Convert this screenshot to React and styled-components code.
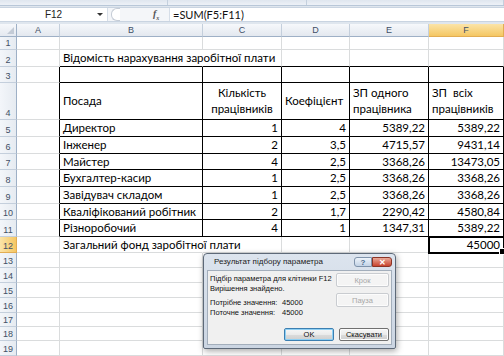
import React from "react";
import styled, { createGlobalStyle } from "styled-components";

const CELL_FONT = `Lato, "Open Sans", sans-serif`;
const UI_FONT = `"Liberation Sans", Arial, sans-serif`;
const GRID = "#dadcdd";
const INK = "#000";

const GlobalStyle = createGlobalStyle`
  html, body { margin: 0; padding: 0; background: #fff; overflow: hidden; }
  #root { width: 504px; height: 356px; overflow: hidden; }
`;

const Window = styled.div`
  position: relative;
  width: 504px;
  height: 356px;
  overflow: hidden;
  background: #dfe6ee;
`;

const RibbonEdge = styled.div`
  height: 6px;
  box-sizing: border-box;
  display: flex;
  background: linear-gradient(#dfe6ef, #edf1f7);
  border-bottom: 1px solid #b8c7d8;
`;

const RibbonGroup = styled.div`
  width: ${(p) => p.$w}px;
  border-right: 1px solid #c4d0de;
`;

const FormulaBar = styled.div`
  margin-top: 1px;
  height: 15px;
  box-sizing: border-box;
  display: flex;
  background: #fff;
  border-top: 1px solid #c9d4e1;
  border-bottom: 1px solid #c9d4e1;
`;

const NameBox = styled.div`
  position: relative;
  width: 107px;
  display: flex;
  align-items: center;
  justify-content: center;
  font: 10px ${UI_FONT};
  color: #222;
  border-right: 1px solid #d6dee8;
  &::after {
    content: "";
    position: absolute;
    right: 4px;
    top: 5px;
    border-left: 3px solid transparent;
    border-right: 3px solid transparent;
    border-top: 3px solid #333;
  }
`;

const FxZone = styled.div`
  width: 61px;
  display: flex;
  align-items: center;
  background: #f4f6f9;
`;

const Grip = styled.div`
  margin-left: 3px;
  width: 8px;
  height: 11px;
  border: 1px solid #c5ccd6;
  border-right: none;
  border-radius: 6px 0 0 6px;
  background: #fff;
`;

const Fx = styled.div`
  margin-left: 33px;
  font: italic bold 10px "Liberation Serif", serif;
  color: #555;
  sub {
    font-size: 6px;
  }
`;

const Formula = styled.div`
  flex: 1;
  display: flex;
  align-items: center;
  padding-left: 3px;
  font: 11px ${CELL_FONT};
  color: #111;
  border-left: 1px solid #d6dee8;
`;

const Sheet = styled.div`
  margin-top: 2px;
  display: grid;
  grid-template-columns: 17px 43px 143px 79px 68px 79px 75px;
  grid-template-rows:
    13px 13px 17px 16px 37px 17px 17px 16px 17px 17px 16px 17px 16px
    15px 15px 15px 15px 14px 14px 15px;
  background: #fff;
  font-family: ${CELL_FONT};
`;

const Corner = styled.div`
  position: relative;
  background: linear-gradient(#f6f8fb, #e4e9f0);
  border-right: 1px solid #9eb0c6;
  border-bottom: 1px solid #9eb0c6;
  &::after {
    content: "";
    position: absolute;
    right: 2px;
    bottom: 2px;
    border-left: 7px solid transparent;
    border-bottom: 7px solid #c3cbd6;
  }
`;

const ColHead = styled.div`
  display: flex;
  align-items: center;
  justify-content: center;
  font: 9px ${UI_FONT};
  color: #3f4f66;
  background: ${(p) =>
    p.$active ? "linear-gradient(#fbe4a8, #f5c763)" : "linear-gradient(#f6f8fb, #e3e8ef)"};
  border-right: 1px solid ${(p) => (p.$active ? "#e2ad52" : "#c4cfdc")};
  border-bottom: 1px solid ${(p) => (p.$active ? "#e2ad52" : "#9eb0c6")};
`;

const RowHead = styled.div`
  display: flex;
  align-items: flex-end;
  justify-content: center;
  padding-bottom: 1px;
  font: 9px ${UI_FONT};
  color: #3f4f66;
  background: ${(p) =>
    p.$active ? "linear-gradient(90deg, #fbe4a8, #f5c763)" : "linear-gradient(90deg, #f3f6fa, #e6ebf1)"};
  border-right: 1px solid ${(p) => (p.$active ? "#e2ad52" : "#9eb0c6")};
  border-bottom: 1px solid ${(p) => (p.$active ? "#e2ad52" : "#c4cfdc")};
`;

const Cell = styled.div`
  position: relative;
  display: flex;
  align-items: center;
  justify-content: ${(p) =>
    p.$align === "right" ? "flex-end" : p.$align === "center" ? "center" : "flex-start"};
  text-align: ${(p) => p.$align};
  padding: 0 3px;
  font-size: 11.5px;
  line-height: 16px;
  color: #000;
  white-space: pre;
  border-right: 1px solid ${(p) => p.$rb};
  border-bottom: 1px solid ${(p) => p.$bb};
  ${(p) =>
    p.$selected &&
    `
    outline: 2px solid #000;
    outline-offset: -1px;
    z-index: 2;
    &::after {
      content: "";
      position: absolute;
      right: -3px;
      bottom: -3px;
      width: 5px;
      height: 5px;
      background: #000;
      border: 1px solid #fff;
    }
  `}
`;

const Dialog = styled.div`
  position: absolute;
  left: 203px;
  top: 253px;
  width: 193px;
  height: 96px;
  box-sizing: border-box;
  padding: 0 3px 3px 3px;
  display: flex;
  flex-direction: column;
  background: linear-gradient(#dce4ee, #cbd5e2);
  border: 1px solid #5d6978;
  border-radius: 4px 4px 2px 2px;
  box-shadow: 1px 2px 6px rgba(0, 0, 0, 0.35);
  font-family: ${UI_FONT};
  z-index: 5;
`;

const TitleBar = styled.div`
  height: 16px;
  display: flex;
  align-items: flex-start;
  justify-content: space-between;
`;

const Title = styled.span`
  padding: 3px 0 0 7px;
  font-size: 8px;
  line-height: 10px;
  color: #1c1c1c;
`;

const CaptionButtons = styled.div`
  display: flex;
  margin-top: 3px;
`;

const CaptionButton = styled.div`
  width: ${(p) => p.$w}px;
  height: 10px;
  box-sizing: border-box;
  display: flex;
  align-items: center;
  justify-content: center;
  font: bold 8px ${UI_FONT};
  color: ${(p) => (p.$close ? "#fff" : "#4d6a8e")};
  background: ${(p) =>
    p.$close ? "linear-gradient(#e9a897, #c8442f)" : "linear-gradient(#edf3fa, #c3d3e6)"};
  border: 1px solid ${(p) => (p.$close ? "#8a3426" : "#7f93ab")};
  border-radius: ${(p) => (p.$close ? "0 3px 3px 0" : "3px 0 0 3px")};
`;

const Body = styled.div`
  flex: 1;
  display: flex;
  flex-direction: column;
  padding: 2px 2px 3px 2px;
  background: #f0f0f0;
  border: 1px solid #a3aebb;
`;

const TopRow = styled.div`
  display: flex;
  justify-content: space-between;
`;

const Info = styled.div`
  flex: 1;
  min-width: 0;
  margin-top: 1px;
  font-size: 7.5px;
  line-height: 10px;
  color: #111;
  white-space: nowrap;
`;

const Gap = styled.div`
  height: 4px;
`;

const ValueLine = styled.div`
  display: grid;
  grid-template-columns: 72px auto;
`;

const SideButtons = styled.div`
  flex-shrink: 0;
  display: flex;
  flex-direction: column;
  gap: 6px;
  width: 53px;
`;

const Footer = styled.div`
  margin-top: auto;
  display: flex;
  justify-content: flex-end;
  gap: 5px;
`;

const Button = styled.div`
  width: ${(p) => p.$w}px;
  height: ${(p) => p.$h}px;
  box-sizing: border-box;
  display: flex;
  align-items: center;
  justify-content: center;
  font-size: 7.5px;
  color: ${(p) => (p.$disabled ? "#a8a8a8" : "#111")};
  background: ${(p) =>
    p.$disabled ? "#f4f4f4" : "linear-gradient(#f7f7f7 0%, #ebebeb 50%, #dcdcdc 51%, #cfcfcf 100%)"};
  border: 1px solid ${(p) => (p.$default ? "#3c7fb1" : p.$disabled ? "#c9ccd0" : "#707070")};
  border-radius: 2px;
  box-shadow: ${(p) => (p.$default ? "inset 0 0 0 1px #8fd0f4" : "inset 0 0 0 1px #fcfcfc")};
`;

const COLS = ["A", "B", "C", "D", "E", "F"];

const staff = [
  ["Директор", "1", "4", "5389,22", "5389,22"],
  ["Інженер", "2", "3,5", "4715,57", "9431,14"],
  ["Майстер", "4", "2,5", "3368,26", "13473,05"],
  ["Бухгалтер-касир", "1", "2,5", "3368,26", "3368,26"],
  ["Завідувач складом", "1", "2,5", "3368,26", "3368,26"],
  ["Кваліфікований робітник", "2", "1,7", "2290,42", "4580,84"],
  ["Різноробочий", "4", "1", "1347,31", "5389,22"],
];

const content = {
  2: { B: { text: "Відомість нарахування заробітної плати" } },
  4: {
    B: { text: "Посада" },
    C: { text: "Кількість\nпрацівників", align: "center" },
    D: { text: "Коефіцієнт" },
    E: { text: "ЗП одного\nпрацівника" },
    F: { text: "ЗП  всіх\nпрацівників" },
  },
  12: {
    B: { text: "Загальний фонд заробітної плати" },
    F: { text: "45000", align: "right" },
  },
};

staff.forEach((row, i) => {
  const r = 5 + i;
  content[r] = { B: { text: row[0] } };
  ["C", "D", "E", "F"].forEach((c, k) => {
    content[r][c] = { text: row[k + 1], align: "right" };
  });
});

function borders(r, c) {
  const ci = COLS.indexOf(c);
  let rb = GRID;
  let bb = GRID;
  if (r >= 3 && r <= 11 && ci >= 1) {
    rb = INK;
    bb = INK;
  }
  if (r >= 3 && r <= 11 && c === "A") rb = INK;
  if (r === 2 && ci >= 1) bb = INK;
  if ((r === 2 || r === 12) && c === "B") rb = "#fff";
  return { rb, bb };
}

const ROWS = Array.from({ length: 19 }, (_, i) => i + 1);

export default function App() {
  return (
    <Window>
      <GlobalStyle />
      <RibbonEdge>
        <RibbonGroup $w={168} />
        <RibbonGroup $w={139} />
        <RibbonGroup $w={197} />
      </RibbonEdge>
      <FormulaBar>
        <NameBox>F12</NameBox>
        <FxZone>
          <Grip />
          <Fx>
            f<sub>x</sub>
          </Fx>
        </FxZone>
        <Formula>=SUM(F5:F11)</Formula>
      </FormulaBar>
      <Sheet>
        <Corner />
        {COLS.map((c) => (
          <ColHead key={c} $active={c === "F"}>
            {c}
          </ColHead>
        ))}
        {ROWS.map((r) => (
          <React.Fragment key={r}>
            <RowHead $active={r === 12}>{r}</RowHead>
            {COLS.map((c) => {
              const cell = (content[r] && content[r][c]) || {};
              const { rb, bb } = borders(r, c);
              return (
                <Cell
                  key={c}
                  $align={cell.align || "left"}
                  $rb={rb}
                  $bb={bb}
                  $selected={r === 12 && c === "F"}
                >
                  {cell.text}
                </Cell>
              );
            })}
          </React.Fragment>
        ))}
      </Sheet>
      <Dialog>
        <TitleBar>
          <Title>Результат підбору параметра</Title>
          <CaptionButtons>
            <CaptionButton $w={18}>?</CaptionButton>
            <CaptionButton $w={20} $close>
              ✕
            </CaptionButton>
          </CaptionButtons>
        </TitleBar>
        <Body>
          <TopRow>
            <Info>
              <div>Підбір параметра для клітинки F12</div>
              <div>Вирішення знайдено.</div>
              <Gap />
              <ValueLine>
                <span>Потрібне значення:</span>
                <span>45000</span>
              </ValueLine>
              <ValueLine>
                <span>Поточне значення:</span>
                <span>45000</span>
              </ValueLine>
            </Info>
            <SideButtons>
              <Button $w={53} $h={14} $disabled>
                Крок
              </Button>
              <Button $w={53} $h={14} $disabled>
                Пауза
              </Button>
            </SideButtons>
          </TopRow>
          <Footer>
            <Button $w={50} $h={13} $default>
              OK
            </Button>
            <Button $w={50} $h={13}>
              Скасувати
            </Button>
          </Footer>
        </Body>
      </Dialog>
    </Window>
  );
}
